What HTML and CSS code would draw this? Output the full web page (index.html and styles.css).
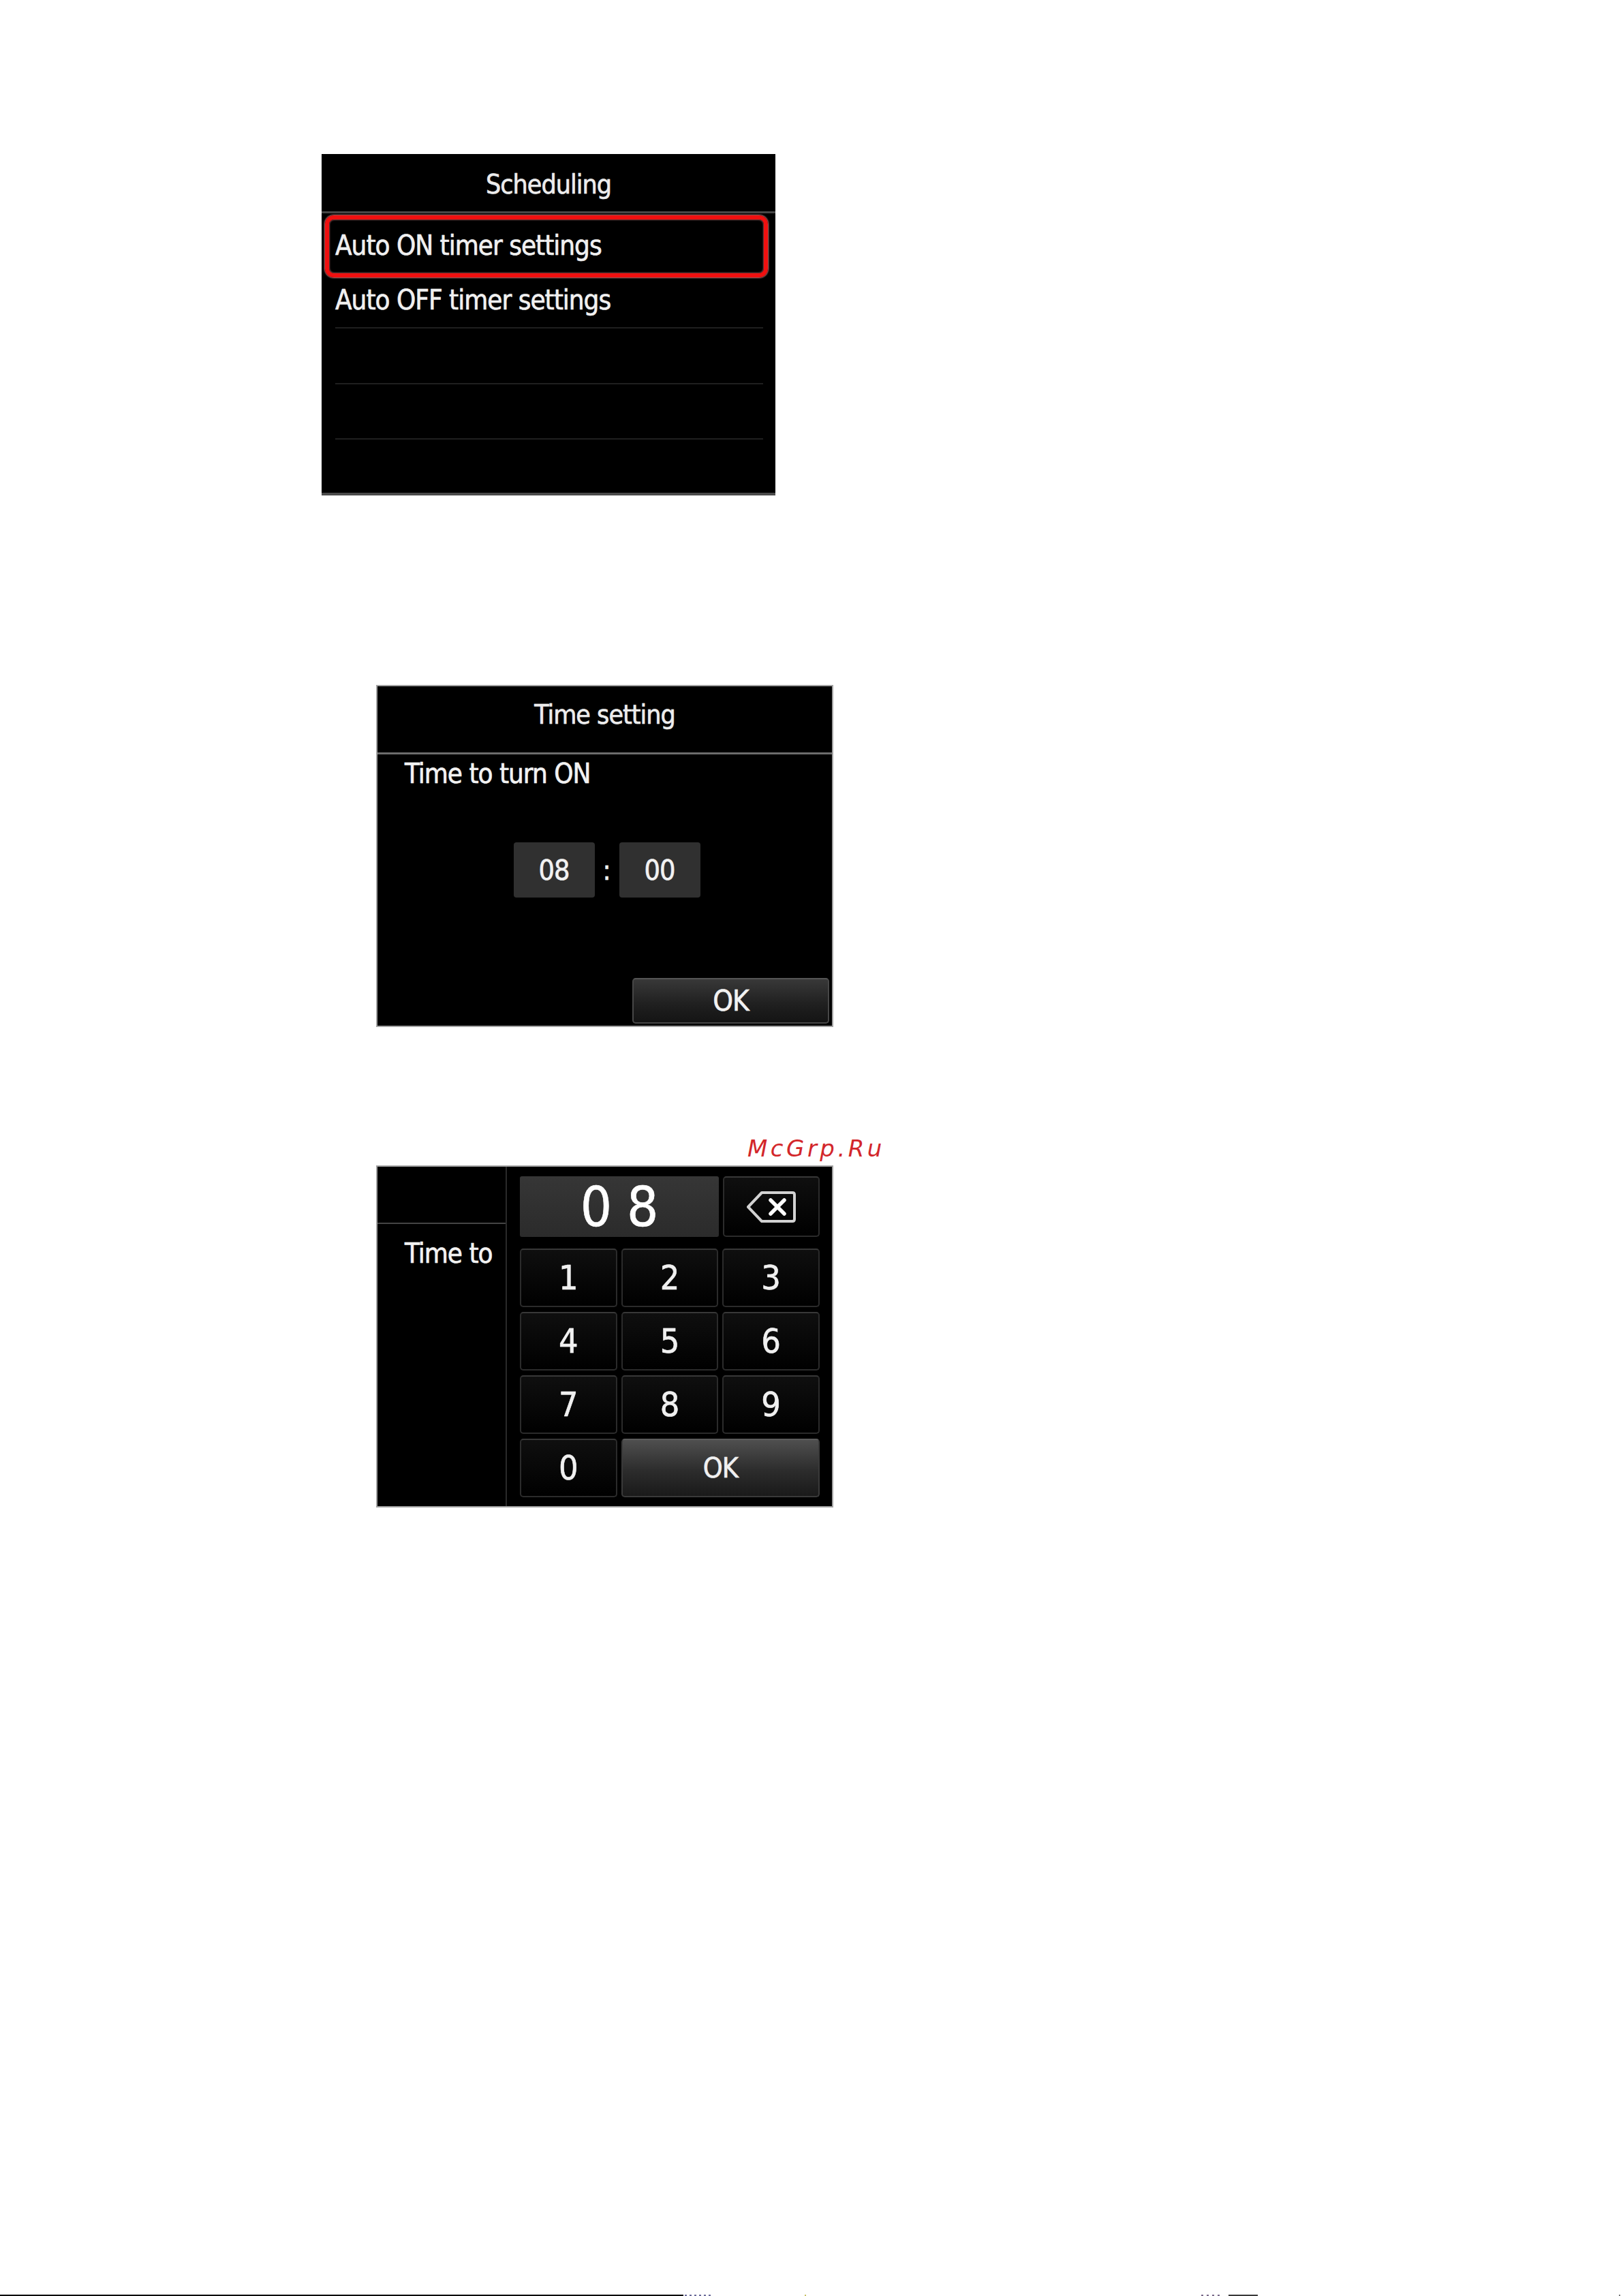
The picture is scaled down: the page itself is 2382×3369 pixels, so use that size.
FILE: index.html
```html
<!DOCTYPE html>
<html lang="en">
<head>
<meta charset="utf-8">
<title>Scheduling - Auto ON timer settings</title>
<link rel="stylesheet" href="styles.css">
</head>
<body>
<div class="page">
  <section class="screen shot1">
    <div class="s1-header"><span class="title">Scheduling</span></div>
    <div class="s1-list">
      <div class="s1-row selected"><span>Auto ON timer settings</span></div>
      <div class="s1-row lined"><span>Auto OFF timer settings</span></div>
      <div class="s1-row lined"></div>
      <div class="s1-row lined"></div>
      <div class="s1-row last"></div>
    </div>
  </section>

  <section class="screen shot2 framed">
    <div class="s2-header"><span class="title">Time setting</span></div>
    <div class="s2-label">Time to turn ON</div>
    <div class="time-row">
      <div class="time-box">08</div>
      <div class="time-colon">:</div>
      <div class="time-box">00</div>
    </div>
    <div class="s2-ok">OK</div>
  </section>

  <div class="watermark">McGrp.Ru</div>

  <section class="screen shot3 framed">
    <div class="s3-left">
      <div class="s3-left-header"></div>
      <div class="s3-label">Time to</div>
    </div>
    <div class="s3-right">
      <div class="entry-row">
        <div class="entry-field">08</div>
        <div class="key backspace">
          <svg width="74" height="48" viewBox="0 0 74 48" aria-hidden="true">
            <path d="M3 24 L23 3 H68 Q71 3 71 6 V42 Q71 45 68 45 H23 Z" fill="none" stroke="#d2d2d2" stroke-width="4" stroke-linejoin="round"/>
            <path d="M36 14 L56 34 M56 14 L36 34" stroke="#ffffff" stroke-width="5.5" stroke-linecap="round"/>
          </svg>
        </div>
      </div>
      <div class="keypad">
        <div class="key">1</div>
        <div class="key">2</div>
        <div class="key">3</div>
        <div class="key">4</div>
        <div class="key">5</div>
        <div class="key">6</div>
        <div class="key">7</div>
        <div class="key">8</div>
        <div class="key">9</div>
        <div class="key">0</div>
        <div class="key ok-key">OK</div>
      </div>
    </div>
  </section>

  <div class="footer">
    <span class="fline"></span>
    <span class="fmark m1"></span>
    <span class="fmark m2"></span>
    <span class="fmark m3"></span>
    <span class="fmark m4"></span>
    <span class="fmark m5"></span>
  </div>
</div>
</body>
</html>
```

FILE: styles.css
```css
html, body {
  margin: 0;
  padding: 0;
  background: #ffffff;
}

body {
  font-family: "DejaVu Sans Condensed", "DejaVu Sans", sans-serif;
  color: #f2f2f2;
}

.page {
  width: 2382px;
  height: 3369px;
  overflow: hidden;
}

.screen {
  background: #000000;
  box-sizing: border-box;
  -webkit-text-stroke: 0.5px currentColor;
  text-shadow: 0 0 1px rgba(255, 255, 255, 0.45);
}

.framed {
  border: 2px solid #a3a3a3;
}

.title {
  font-size: 39px;
  letter-spacing: -1px;
  color: #ececec;
}

/* ---------- Screen 1 ---------- */
.shot1 {
  margin: 226px 0 0 472px;
  width: 666px;
  height: 501px;
  border-bottom: 4px solid #4b4b4b;
  display: flex;
  flex-direction: column;
}

.s1-header {
  height: 87px;
  box-sizing: border-box;
  padding-top: 5px;
  border-bottom: 3px solid #474747;
  display: flex;
  align-items: center;
  justify-content: center;
}

.s1-list {
  flex: 1;
  padding-top: 6px;
  display: flex;
  flex-direction: column;
}

.s1-row {
  height: 81.5px;
  margin: 0 18px 0 20px;
  box-sizing: border-box;
  display: flex;
  align-items: center;
  font-size: 40px;
  letter-spacing: -1px;
  color: #f0f0f0;
  position: relative;
  flex: none;
}

.s1-row.lined {
  border-bottom: 2px solid #1f1f1f;
}

.s1-row.last {
  flex: 1;
  height: auto;
}

.s1-row.selected::before {
  content: "";
  position: absolute;
  left: -15px;
  right: -7px;
  top: -3px;
  bottom: -6px;
  border: 6px solid #f01010;
  border-radius: 13px;
  box-shadow: 0 0 2px 1px rgba(255, 150, 150, 0.75), inset 0 0 2px 1px rgba(255, 140, 140, 0.5);
}

/* ---------- Screen 2 ---------- */
.shot2 {
  margin: 278px 0 0 552px;
  width: 671px;
  height: 502px;
  display: flex;
  flex-direction: column;
}

.s2-header {
  height: 100px;
  box-sizing: border-box;
  padding-bottom: 14px;
  border-bottom: 3px solid #6c6c6c;
  display: flex;
  align-items: center;
  justify-content: center;
}

.s2-label {
  margin-top: 3px;
  padding-left: 40px;
  line-height: 50px;
  font-size: 40px;
  letter-spacing: -1px;
}

.time-row {
  margin-top: 76px;
  padding-left: 6px;
  display: flex;
  justify-content: center;
}

.time-box {
  width: 119px;
  height: 81px;
  background: #303030;
  border-radius: 4px;
  display: flex;
  align-items: center;
  justify-content: center;
  font-size: 41px;
  letter-spacing: -1px;
}

.time-colon {
  width: 36px;
  display: flex;
  align-items: center;
  justify-content: center;
  font-size: 40px;
}

.s2-ok {
  margin: auto 4px 3px 0;
  align-self: flex-end;
  width: 289px;
  height: 67px;
  box-sizing: border-box;
  border: 2px solid #474747;
  border-top-color: #555555;
  border-radius: 5px;
  background: linear-gradient(#383838, #1f1f1f 60%, #141414);
  display: flex;
  align-items: center;
  justify-content: center;
  font-size: 42px;
  letter-spacing: -1px;
}

/* ---------- Watermark ---------- */
.watermark {
  margin: 158px 0 0 1097px;
  font-family: "DejaVu Sans", sans-serif;
  font-style: italic;
  font-size: 34px;
  line-height: 40px;
  letter-spacing: 4.5px;
  color: #d3272b;
}

/* ---------- Screen 3 ---------- */
.shot3 {
  margin: 5px 0 0 552px;
  width: 671px;
  height: 502px;
  display: flex;
}

.s3-left {
  width: 188px;
  flex: none;
  border-right: 2px solid #2a2a2a;
  overflow: hidden;
}

.s3-left-header {
  height: 84px;
  box-sizing: border-box;
  border-bottom: 2px solid #444444;
}

.s3-label {
  margin-top: 18px;
  padding-left: 40px;
  line-height: 50px;
  font-size: 40px;
  letter-spacing: -1px;
  white-space: nowrap;
}

.s3-right {
  flex: 1;
  padding: 14px 18px 0 19px;
}

.entry-row {
  display: flex;
  gap: 6px;
  height: 89px;
}

.entry-field {
  width: 292px;
  box-sizing: border-box;
  padding-left: 22px;
  background: linear-gradient(#363636, #2b2b2b);
  border-radius: 3px;
  display: flex;
  align-items: center;
  justify-content: center;
  font-size: 81px;
  letter-spacing: 22px;
  color: #ffffff;
}

.key {
  box-sizing: border-box;
  border: 2px solid #2b2b2b;
  border-top-color: #383838;
  border-radius: 5px;
  background: linear-gradient(#0f0f0f, #000000);
  display: flex;
  align-items: center;
  justify-content: center;
  font-size: 50px;
  color: #f0f0f0;
}

.backspace {
  flex: 1;
}

.keypad {
  margin-top: 17px;
  display: grid;
  grid-template-columns: repeat(3, 1fr);
  grid-template-rows: repeat(4, 86px);
  column-gap: 6px;
  row-gap: 7px;
}

.ok-key {
  grid-column: span 2;
  border-color: #3a3a3a;
  border-top-color: #5c5c5c;
  background: linear-gradient(#4f4f4f, #2c2c2c 55%, #1a1a1a);
  font-size: 41px;
  letter-spacing: -1px;
}

/* ---------- Footer edge ---------- */
.footer {
  margin-top: 1155px;
  height: 2px;
  display: flex;
}

.fline {
  width: 1003px;
  background: #000000;
}

.fmark {
  background: #555555;
}

.m1 { width: 38px; margin-left: 2px; background: repeating-linear-gradient(90deg, #6a6a9a 0 3px, transparent 3px 7px); }
.m2 { width: 2px; margin-left: 138px; background: #c8c060; }
.m3 { width: 32px; margin-left: 580px; background: repeating-linear-gradient(90deg, #7a6a8a 0 3px, transparent 3px 8px); }
.m4 { width: 43px; margin-left: 8px; background: #3a3a3a; }
.m5 { width: 2px; margin-left: 530px; background: #777777; }
```
